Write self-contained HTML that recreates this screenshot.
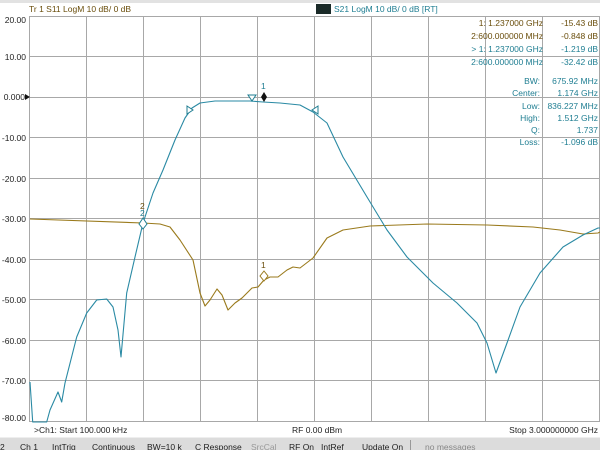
<!DOCTYPE html>
<html><head><meta charset="utf-8"><style>
html,body{margin:0;padding:0;background:#fff;width:600px;height:450px;overflow:hidden}
svg{display:block}
text{font-family:"Liberation Sans",sans-serif;font-size:8.5px}
</style></head><body>
<svg width="600" height="450" viewBox="0 0 600 450">
<rect x="0" y="0" width="600" height="3" fill="#e2e2e2"/>
<text x="29" y="12" fill="#6a4e0c">Tr 1   S11  LogM  10 dB/  0 dB</text>
<rect x="316" y="4" width="15" height="10" fill="#1a2a28"/>
<text x="334" y="12" fill="#1f7e92">S21  LogM  10 dB/  0 dB  [RT]</text>
<g stroke="#a8a8a8" stroke-width="1" fill="none">
<path d="M29.5 16V422M86.5 16V422M143.5 16V422M200.5 16V422M257.5 16V422M314.5 16V422M371.5 16V422M428.5 16V422M485.5 16V422M542.5 16V422M599.5 16V422"/>
<path d="M29 16.5H600M29 56.5H600M29 97.5H600M29 137.5H600M29 178.5H600M29 218.5H600M29 259.5H600M29 299.5H600M29 340.5H600M29 380.5H600M29 421.5H600"/>
</g>
<g fill="#222" text-anchor="end">
<text x="26" y="23">20.00</text><text x="26" y="60">10.00</text><text x="25" y="100">0.000</text>
<text x="26" y="141">-10.00</text><text x="26" y="182">-20.00</text><text x="26" y="222">-30.00</text>
<text x="26" y="263">-40.00</text><text x="26" y="303">-50.00</text><text x="26" y="344">-60.00</text>
<text x="26" y="384">-70.00</text><text x="26" y="421">-80.00</text>
</g>
<path d="M25 94L30 97L25 100Z" fill="#111"/>
<path d="M30,219 L143,223 L160,224 L170,227 L180,240 L193,260 L200,293 L205,306 L210,300 L217,289 L222,295 L228,310 L235,303 L242,298 L252,288 L258,287 L264,280 L270,277 L278,277 L287,270 L293,267 L300,268 L313,258 L327,238 L343,230 L370,226 L427,224 L487,225 L533,227 L560,230 L583,234 L598,233 L600,232" fill="none" stroke="#9a7a1c" stroke-width="1.1" stroke-linejoin="round"/>
<path d="M30,382 L32.7,422 L46.7,422 L50,410 L58,392 L61.7,402 L65,383 L76.7,337 L86.7,313 L96.7,300 L106.7,299 L113,307 L118,330 L121,357 L126.7,293 L135,257 L143,223 L153,193 L163,170 L175,140 L185,118 L192,108 L200,103 L215,101 L250,101 L263,102 L280,103 L300,105 L313,112 L327,123 L343,157 L367,197 L387,230 L407,257 L433,283 L457,303 L477,323 L487,343 L496,373 L507,343 L520,307 L540,273 L563,247 L583,235 L598,228 L600,228" fill="none" stroke="#2a8aa4" stroke-width="1.1" stroke-linejoin="round"/>
<path d="M264 92L267 97L264 102L261 97Z" fill="#111"/>
<text x="261" y="89" fill="#1f7e92">1</text>
<path d="M248 95H256L252 101Z" fill="#fff" stroke="#1f7e92"/>
<path d="M187 106V114L193 110Z" fill="#fff" stroke="#1f7e92"/>
<path d="M318 106V114L312 110Z" fill="#fff" stroke="#1f7e92"/>
<path d="M264 271L268 276L264 281L260 276Z" fill="#fff" stroke="#9a7a1c"/>
<text x="261" y="268" fill="#6a4e0c">1</text>
<path d="M143 218L147 224L143 229L139 224Z" fill="#fff" stroke="#1f7e92"/>
<text x="140" y="209" fill="#6a4e0c">2</text>
<text x="140" y="216" fill="#1f7e92">2</text>
<g text-anchor="end">
<text x="543" y="26" fill="#6a4e0c">1:   1.237000 GHz</text><text x="598" y="26" fill="#6a4e0c">-15.43 dB</text>
<text x="543" y="39" fill="#6a4e0c">2:600.000000 MHz</text><text x="598" y="39" fill="#6a4e0c">-0.848 dB</text>
<text x="543" y="52" fill="#1f7e92">&gt; 1:   1.237000 GHz</text><text x="598" y="52" fill="#1f7e92">-1.219 dB</text>
<text x="543" y="65" fill="#1f7e92">2:600.000000 MHz</text><text x="598" y="65" fill="#1f7e92">-32.42 dB</text>
<text x="540" y="84" fill="#1f7e92">BW:</text><text x="598" y="84" fill="#1f7e92">675.92 MHz</text>
<text x="540" y="96" fill="#1f7e92">Center:</text><text x="598" y="96" fill="#1f7e92">1.174 GHz</text>
<text x="540" y="109" fill="#1f7e92">Low:</text><text x="598" y="109" fill="#1f7e92">836.227 MHz</text>
<text x="540" y="121" fill="#1f7e92">High:</text><text x="598" y="121" fill="#1f7e92">1.512 GHz</text>
<text x="540" y="133" fill="#1f7e92">Q:</text><text x="598" y="133" fill="#1f7e92">1.737</text>
<text x="540" y="145" fill="#1f7e92">Loss:</text><text x="598" y="145" fill="#1f7e92">-1.096 dB</text>
</g>
<text x="34" y="433" fill="#222">&gt;Ch1: Start 100.000 kHz</text>
<text x="292" y="433" fill="#222">RF 0.00 dBm</text>
<text x="598" y="433" fill="#222" text-anchor="end">Stop 3.000000000 GHz</text>
<rect x="0" y="437" width="600" height="13" fill="#dcdcdc"/>
<rect x="0" y="437" width="600" height="1" fill="#eeeeee"/>
<g fill="#222">
<text x="0" y="450">2</text><text x="20" y="450">Ch 1</text><text x="52" y="450">IntTrig</text><text x="92" y="450">Continuous</text>
<text x="147" y="450">BW=10 k</text><text x="195" y="450">C Response</text><text x="251" y="450" fill="#999">SrcCal</text>
<text x="289" y="450">RF On</text><text x="321" y="450">IntRef</text><text x="362" y="450">Update On</text>
<text x="425" y="450" fill="#888">no messages</text>
</g>
<rect x="410" y="440" width="1" height="10" fill="#999"/>
</svg>
</body></html>
